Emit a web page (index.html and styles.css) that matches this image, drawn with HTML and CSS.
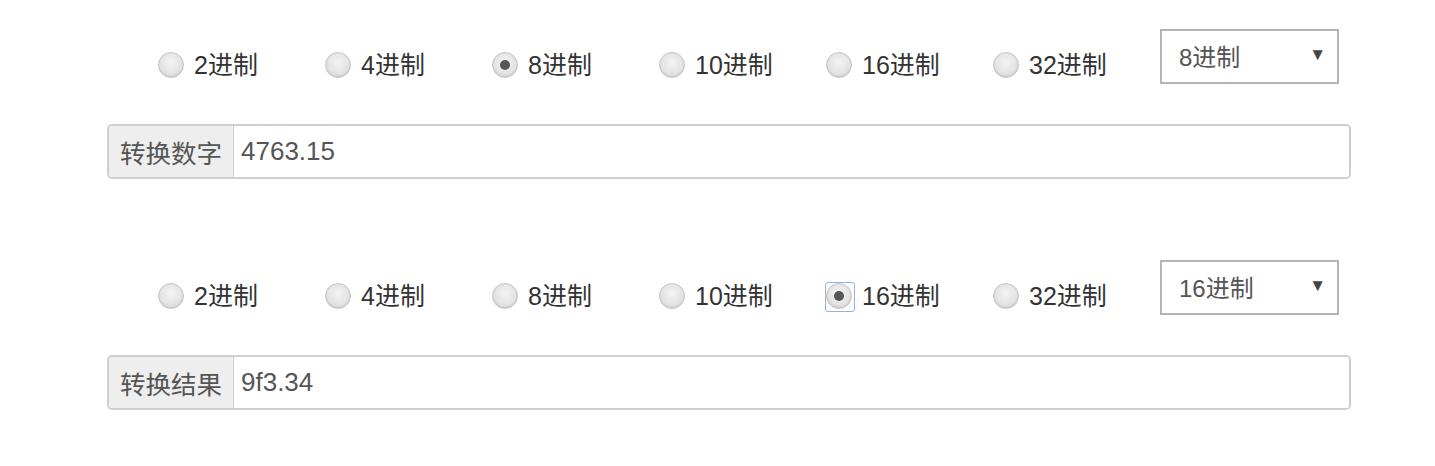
FILE: index.html
```html
<!DOCTYPE html>
<html lang="zh-CN">

<head>
  <meta charset="UTF-8">
  <title>进制转换</title>
  <meta name="viewport" content="width=device-width, initial-scale=1.0" />
  <link rel="stylesheet" href="styles.css">
</head>

<body>
  <div class="converter">
    <div class="block">
      <div class="radio-row">
        <label class="radio-item"><input type="radio" name="from"> 2进制</label>
        <label class="radio-item"><input type="radio" name="from"> 4进制</label>
        <label class="radio-item"><input type="radio" name="from" checked> 8进制</label>
        <label class="radio-item"><input type="radio" name="from"> 10进制</label>
        <label class="radio-item"><input type="radio" name="from"> 16进制</label>
        <label class="radio-item"><input type="radio" name="from"> 32进制</label>
        <div class="select-box"><span>8进制</span><span class="arrow">▼</span></div>
      </div>
      <div class="input-group">
        <span class="addon">转换数字</span>
        <input type="text" class="field" value="4763.15">
      </div>
    </div>

    <div class="block second">
      <div class="radio-row">
        <label class="radio-item"><input type="radio" name="to"> 2进制</label>
        <label class="radio-item"><input type="radio" name="to"> 4进制</label>
        <label class="radio-item"><input type="radio" name="to"> 8进制</label>
        <label class="radio-item"><input type="radio" name="to"> 10进制</label>
        <label class="radio-item"><input type="radio" name="to" class="focused" checked> 16进制</label>
        <label class="radio-item"><input type="radio" name="to"> 32进制</label>
        <div class="select-box"><span>16进制</span><span class="arrow">▼</span></div>
      </div>
      <div class="input-group">
        <span class="addon">转换结果</span>
        <input type="text" class="field" value="9f3.34">
      </div>
    </div>
  </div>
</body>

</html>
```

FILE: styles.css
```css
* {
  box-sizing: border-box;
}

body {
  margin: 0;
  background: #fff;
  font-family: "Liberation Sans", Arial, "Noto Sans CJK SC", sans-serif;
  color: #333;
}

.converter {
  width: 1244px;
  margin-left: 107px;
  padding-top: 29px;
}

.block.second {
  margin-top: 81px;
}

.radio-row {
  display: flex;
  align-items: flex-start;
  height: 55px;
  padding-left: 51px;
  margin-bottom: 40px;
}

.radio-item {
  width: 167px;
  margin-top: 22px;
  display: flex;
  align-items: center;
  gap: 10px;
  font-size: 25px;
  line-height: 28px;
  color: #333;
}

.radio-item input {
  appearance: none;
  -webkit-appearance: none;
  margin: 0;
  width: 26px;
  height: 26px;
  border-radius: 50%;
  border: 1px solid #c4c4c4;
  background: radial-gradient(circle at 50% 40%, #f4f4f4 0%, #e2e2e2 60%, #d0d0d0 100%);
  box-shadow: inset 0 -1px 2px rgba(0, 0, 0, 0.08);
  position: relative;
  flex-shrink: 0;
}

.radio-item input:checked::after {
  content: "";
  position: absolute;
  left: 7px;
  top: 7px;
  width: 10px;
  height: 10px;
  border-radius: 50%;
  background: #555;
}

.radio-item input.focused::before {
  content: "";
  position: absolute;
  left: -2px;
  top: -2px;
  width: 28px;
  height: 28px;
  border: 1px solid #8fb5de;
  border-radius: 3px;
}

.select-box {
  width: 179px;
  height: 55px;
  border: 2px solid #b4b4b4;
  display: flex;
  align-items: center;
  justify-content: space-between;
  padding: 0 11px 3px 17px;
  font-size: 24px;
  color: #555;
}

.select-box .arrow {
  font-size: 17px;
  color: #444;
}

.input-group {
  display: flex;
  height: 55px;
  border: 2px solid #cfcfcf;
  border-radius: 5px;
  overflow: hidden;
}

.addon {
  width: 125px;
  background: #eee;
  border-right: 1px solid #d0d0d0;
  display: flex;
  align-items: center;
  justify-content: center;
  font-size: 25.5px;
  color: #555;
}

.field {
  flex: 1;
  border: none;
  outline: none;
  padding: 0 7px;
  font-family: inherit;
  font-size: 26px;
  color: #555;
}
```
